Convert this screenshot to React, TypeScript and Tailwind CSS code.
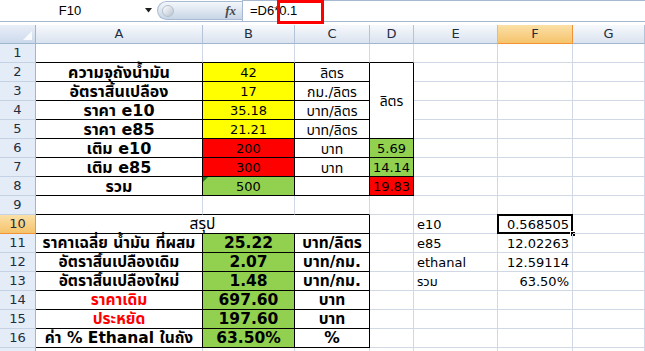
import React from 'react';

type CellProps = {
  children?: React.ReactNode;
  rb?: boolean;
  bb?: boolean;
  bg?: string;
  align?: 'l' | 'c' | 'r';
  bold?: boolean;
  red?: boolean;
  span?: string;
  size?: string;
  extra?: React.ReactNode;
};

const Cell: React.FC<CellProps> = ({ children, rb, bb, bg = '', align = 'c', bold, red, span = '', size = 'text-[13px]', extra }) => {
  const justify = align === 'l' ? 'justify-start pl-[3px]' : align === 'r' ? 'justify-end pr-[3px]' : 'justify-center';
  return (
    <div
      className={[
        'relative flex items-center overflow-visible whitespace-nowrap border-r border-b leading-none pt-[1px]',
        rb ? 'border-r-black' : 'border-r-[#d0d7e5]',
        bb ? 'border-b-black' : 'border-b-[#d0d7e5]',
        justify,
        bg,
        span,
        bold ? 'font-bold' : 'font-normal',
        red ? 'text-[#ff0000]' : 'text-black',
        size,
      ].join(' ')}
    >
      {children}
      {extra}
    </div>
  );
};

const RowHead: React.FC<{ n?: number; active?: boolean }> = ({ n, active }) => (
  <div
    className={
      active
        ? 'flex items-center justify-center border-r border-b border-r-[#f29436] border-b-[#f29436] bg-linear-to-b from-[#fbe0a6] to-[#f5c36b] text-[13px] text-[#1f2d3d]'
        : 'flex items-center justify-center border-r border-b border-r-[#9eb6ce] border-b-[#c5d2e3] bg-[#e4ecf7] text-[13px] text-[#1f2d3d]'
    }
  >
    {n}
  </div>
);

const ColHead: React.FC<{ label: string; active?: boolean }> = ({ label, active }) => (
  <div
    className={
      active
        ? 'flex items-center justify-center border-r border-b border-r-[#f29436] border-b-[#f29436] bg-linear-to-b from-[#fbe0a6] to-[#f5c36b] text-[13px] text-[#1f2d3d]'
        : 'flex items-center justify-center border-r border-b border-r-[#b4c4d8] border-b-[#9eb6ce] bg-linear-to-b from-[#f7f9fc] to-[#dae3ef] text-[13px] text-[#1f2d3d]'
    }
  >
    {label}
  </div>
);

const YEL = 'bg-[#ffff00]';
const RED = 'bg-[#ff0000]';
const GRN = 'bg-[#92d050]';
const HEAD = 'text-[16px]';
const SUM = 'text-[15.5px]';
const UNIT = 'text-[14px]';

const App: React.FC = () => {
  return (
    <div className="relative h-[351px] w-[645px] overflow-hidden bg-white font-['Liberation_Sans',Arial,sans-serif]">
      {/* formula bar */}
      <div className="flex h-[22px] border-b border-[#a7b9d0]">
        <div className="flex w-[157px] items-center">
          <span className="w-[140px] text-center text-[13px] text-black">F10</span>
          <svg width="8" height="5" viewBox="0 0 8 5" className="ml-[5px]">
            <path d="M0 0h7L3.5 4.5z" fill="#1f1f1f" />
          </svg>
        </div>
        <div className="mt-[1px] mb-[1px] flex w-[85px] items-center rounded-l-full border border-r-0 border-[#a9bbd2] bg-linear-to-b from-[#f4f7fb] to-[#c8d5e6]">
          <div className="ml-[4px] h-[12px] w-[12px] rounded-full border border-[#b3c0d0] bg-linear-to-br from-white to-[#b8c3d0]" />
          <span className="ml-auto mr-[6px] font-['Liberation_Serif',serif] text-[13px] font-bold italic text-[#4a4a4a]">
            fx
          </span>
        </div>
        <div className="flex flex-1 items-center border-t border-l border-[#a7b9d0] pl-[7px] text-[13px] text-black">
          =D6*0.1
        </div>
      </div>
      <div className="pointer-events-none absolute left-[277px] top-0 h-[24px] w-[47px] border-[3px] border-[#ff0000]" />

      {/* sheet */}
      <div className="mt-[3px] grid grid-cols-[36px_167px_92px_75px_44px_84px_75px_72px] auto-rows-[19px] font-['DejaVu_Sans','Noto_Sans_Thai','Loma','Garuda','Tlwg_Typo',sans-serif]">
        <div className="relative border-r border-b border-r-[#9eb6ce] border-b-[#9eb6ce] bg-linear-to-b from-[#e9eff8] to-[#ccd9ec]">
          <svg width="9" height="9" viewBox="0 0 9 9" className="absolute right-[3px] bottom-[3px]">
            <path d="M9 0v9H0z" fill="#ffffff" opacity="0.85" />
          </svg>
        </div>
        <ColHead label="A" />
        <ColHead label="B" />
        <ColHead label="C" />
        <ColHead label="D" />
        <ColHead label="E" />
        <ColHead label="F" active />
        <ColHead label="G" />

        {/* row 1 */}
        <RowHead n={1} />
        <Cell bb />
        <Cell bb />
        <Cell bb />
        <Cell bb />
        <Cell />
        <Cell />
        <Cell />

        {/* row 2 */}
        <RowHead n={2} />
        <Cell rb bb bold size={HEAD}>ความจุถังน้ำมัน</Cell>
        <Cell rb bb bg={YEL}>42</Cell>
        <Cell rb bb size={UNIT}>ลิตร</Cell>
        <Cell rb bb span="row-span-4" size={UNIT}>ลิตร</Cell>
        <Cell />
        <Cell />
        <Cell />

        {/* row 3 */}
        <RowHead n={3} />
        <Cell rb bb bold size={HEAD}>อัตราสิ้นเปลือง</Cell>
        <Cell rb bb bg={YEL}>17</Cell>
        <Cell rb bb size={UNIT}>กม./ลิตร</Cell>
        <Cell />
        <Cell />
        <Cell />

        {/* row 4 */}
        <RowHead n={4} />
        <Cell rb bb bold size={HEAD}>ราคา e10</Cell>
        <Cell rb bb bg={YEL}>35.18</Cell>
        <Cell rb bb size={UNIT}>บาท/ลิตร</Cell>
        <Cell />
        <Cell />
        <Cell />

        {/* row 5 */}
        <RowHead n={5} />
        <Cell rb bb bold size={HEAD}>ราคา e85</Cell>
        <Cell rb bb bg={YEL}>21.21</Cell>
        <Cell rb bb size={UNIT}>บาท/ลิตร</Cell>
        <Cell />
        <Cell />
        <Cell />

        {/* row 6 */}
        <RowHead n={6} />
        <Cell rb bb bold size={HEAD}>เติม e10</Cell>
        <Cell rb bb bg={RED}>200</Cell>
        <Cell rb bb size={UNIT}>บาท</Cell>
        <Cell rb bb bg={GRN}>5.69</Cell>
        <Cell />
        <Cell />
        <Cell />

        {/* row 7 */}
        <RowHead n={7} />
        <Cell rb bb bold size={HEAD}>เติม e85</Cell>
        <Cell rb bb bg={RED}>300</Cell>
        <Cell rb bb size={UNIT}>บาท</Cell>
        <Cell rb bb bg={GRN}>14.14</Cell>
        <Cell />
        <Cell />
        <Cell />

        {/* row 8 */}
        <RowHead n={8} />
        <Cell rb bb bold size={HEAD}>รวม</Cell>
        <Cell
          rb
          bb
          bg={GRN}
          extra={
            <svg width="5" height="5" viewBox="0 0 5 5" className="absolute left-0 top-0">
              <path d="M0 0h5L0 5z" fill="#1e7a1e" />
            </svg>
          }
        >
          500
        </Cell>
        <Cell rb bb />
        <Cell rb bb bg={RED}>19.83</Cell>
        <Cell />
        <Cell />
        <Cell />

        {/* row 9 */}
        <RowHead n={9} />
        <Cell bb />
        <Cell bb />
        <Cell bb />
        <Cell />
        <Cell />
        <Cell />
        <Cell />

        {/* row 10 */}
        <RowHead n={10} active />
        <Cell rb bb size={SUM} span="col-span-3">สรุป</Cell>
        <Cell />
        <Cell align="l">e10</Cell>
        <Cell
          align="r"
          extra={
            <>
              <div className="absolute -left-[1px] -top-[1px] right-[-1px] bottom-[-1px] border-2 border-black" />
              <div className="absolute -right-[4px] -bottom-[4px] h-[6px] w-[6px] border border-white bg-black" />
            </>
          }
        >
          0.568505
        </Cell>
        <Cell />

        {/* row 11 */}
        <RowHead n={11} />
        <Cell rb bb bold size={SUM}>ราคาเฉลี่ย น้ำมัน ที่ผสม</Cell>
        <Cell rb bb bold size={SUM} bg={GRN}>25.22</Cell>
        <Cell rb bb bold size={SUM}>บาท/ลิตร</Cell>
        <Cell />
        <Cell align="l">e85</Cell>
        <Cell align="r">12.02263</Cell>
        <Cell />

        {/* row 12 */}
        <RowHead n={12} />
        <Cell rb bb bold size={SUM}>อัตราสิ้นเปลืองเดิม</Cell>
        <Cell rb bb bold size={SUM} bg={GRN}>2.07</Cell>
        <Cell rb bb bold size={SUM}>บาท/กม.</Cell>
        <Cell />
        <Cell align="l">ethanal</Cell>
        <Cell align="r">12.59114</Cell>
        <Cell />

        {/* row 13 */}
        <RowHead n={13} />
        <Cell rb bb bold size={SUM}>อัตราสิ้นเปลืองใหม่</Cell>
        <Cell rb bb bold size={SUM} bg={GRN}>1.48</Cell>
        <Cell rb bb bold size={SUM}>บาท/กม.</Cell>
        <Cell />
        <Cell align="l">รวม</Cell>
        <Cell align="r">63.50%</Cell>
        <Cell />

        {/* row 14 */}
        <RowHead n={14} />
        <Cell rb bb bold size={SUM} red>ราคาเดิม</Cell>
        <Cell rb bb bold size={SUM} bg={GRN}>697.60</Cell>
        <Cell rb bb bold size={SUM}>บาท</Cell>
        <Cell />
        <Cell />
        <Cell />
        <Cell />

        {/* row 15 */}
        <RowHead n={15} />
        <Cell rb bb bold size={SUM} red>ประหยัด</Cell>
        <Cell rb bb bold size={SUM} bg={GRN}>197.60</Cell>
        <Cell rb bb bold size={SUM}>บาท</Cell>
        <Cell />
        <Cell />
        <Cell />
        <Cell />

        {/* row 16 */}
        <RowHead n={16} />
        <Cell rb bb bold size={SUM}>ค่า % Ethanal ในถัง</Cell>
        <Cell rb bb bold size={SUM} bg={GRN}>63.50%</Cell>
        <Cell rb bb bold size={SUM}>%</Cell>
        <Cell />
        <Cell />
        <Cell />
        <Cell />

        {/* row 17, only its top edge is in view */}
        <RowHead />
        <Cell />
        <Cell />
        <Cell />
        <Cell />
        <Cell />
        <Cell />
        <Cell />
      </div>
    </div>
  );
};

export default App;
